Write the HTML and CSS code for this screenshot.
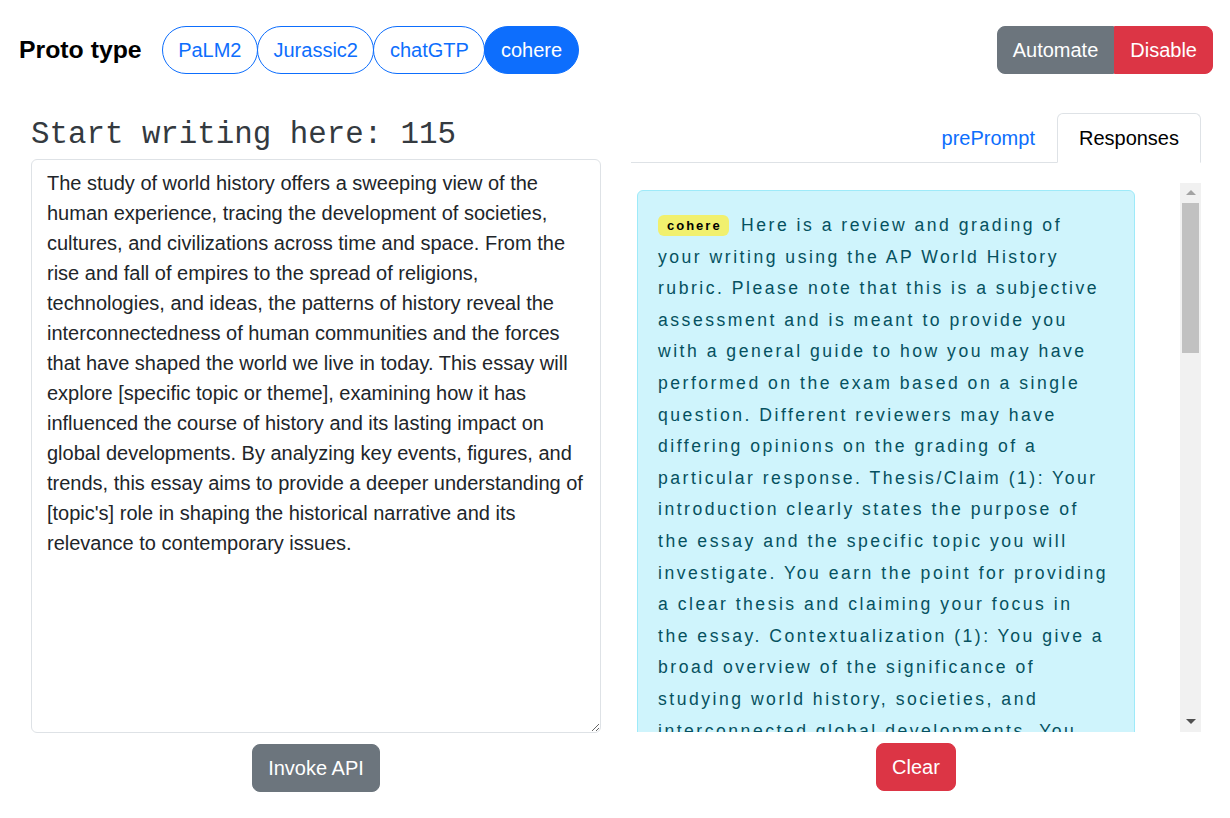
FILE: index.html
```html
<!DOCTYPE html>
<html lang="en">
<head>
<meta charset="utf-8">
<title>Proto type</title>
<link rel="stylesheet" href="styles.css">
</head>
<body>
<header class="topbar">
  <div class="brand-group">
    <h1 class="brand">Proto type</h1>
    <div class="models">
      <button class="pill">PaLM2</button>
      <button class="pill">Jurassic2</button>
      <button class="pill">chatGTP</button>
      <button class="pill active">cohere</button>
    </div>
  </div>
  <div class="btn-group">
    <button class="btn btn-secondary group-first">Automate</button>
    <button class="btn btn-danger group-last">Disable</button>
  </div>
</header>

<main class="main">
  <section class="col">
    <h2 class="writing-title">Start writing here: 115</h2>
    <textarea class="editor">The study of world history offers a sweeping view of the human experience, tracing the development of societies, cultures, and civilizations across time and space. From the rise and fall of empires to the spread of religions, technologies, and ideas, the patterns of history reveal the interconnectedness of human communities and the forces that have shaped the world we live in today. This essay will explore [specific topic or theme], examining how it has influenced the course of history and its lasting impact on global developments. By analyzing key events, figures, and trends, this essay aims to provide a deeper understanding of [topic's] role in shaping the historical narrative and its relevance to contemporary issues.</textarea>
    <div class="actions">
      <button class="btn btn-secondary">Invoke API</button>
    </div>
  </section>

  <section class="col">
    <ul class="tabs">
      <li><a class="tab">prePrompt</a></li>
      <li><a class="tab tab-active">Responses</a></li>
    </ul>
    <div class="scroll-box">
      <div class="scroll-content">
        <div class="alert">
          <span class="badge">cohere</span> Here is a review and grading of your writing using the AP World History rubric. Please note that this is a subjective assessment and is meant to provide you with a general guide to how you may have performed on the exam based on a single question. Different reviewers may have differing opinions on the grading of a particular response. Thesis/Claim (1): Your introduction clearly states the purpose of the essay and the specific topic you will investigate. You earn the point for providing a clear thesis and claiming your focus in the essay. Contextualization (1): You give a broad overview of the significance of studying world history, societies, and interconnected global developments. You describe the broader historical context relevant to the prompt, which earns the contextualization point. Evidence (1): You reference empires, religions, technologies and ideas, but more specific examples would strengthen your argument.
        </div>
      </div>
      <div class="scrollbar">
        <span class="arrow-up"></span>
        <span class="thumb"></span>
        <span class="track-rest"></span>
        <span class="arrow-down"></span>
      </div>
    </div>
    <div class="actions">
      <button class="btn btn-danger">Clear</button>
    </div>
  </section>
</main>
</body>
</html>
```

FILE: styles.css
```css
* { box-sizing: border-box; }

body {
  margin: 0;
  font-family: "Liberation Sans", Arial, sans-serif;
  color: #212529;
  background: #fff;
}

button { font-family: inherit; }

.topbar {
  display: flex;
  align-items: center;
  justify-content: space-between;
  padding: 26px 17px 0 19px;
}

.brand-group {
  display: flex;
  align-items: center;
}

.brand {
  margin: 0 20px 0 0;
  font-size: 24.8px;
  font-weight: 700;
  line-height: 1.2;
  color: #000;
}

.models { display: flex; }

.pill {
  font-size: 20px;
  line-height: 30px;
  padding: 8px 15.5px;
  border: 1px solid #0d6efd;
  border-radius: 50rem;
  background: #fff;
  color: #0d6efd;
  cursor: pointer;
}

.pill + .pill { margin-left: -1px; }

.pill.active {
  background: #0d6efd;
  color: #fff;
}

.btn-group { display: flex; }

.btn {
  font-size: 20px;
  line-height: 30px;
  padding: 8px 15px;
  border: 1px solid transparent;
  border-radius: 8px;
  color: #fff;
  cursor: pointer;
}

.btn-secondary { background: #6c757d; border-color: #6c757d; }
.btn-danger { background: #dc3545; border-color: #dc3545; }

.group-first { border-top-right-radius: 0; border-bottom-right-radius: 0; }
.group-last { border-top-left-radius: 0; border-bottom-left-radius: 0; }

.main {
  display: grid;
  grid-template-columns: 570px 570px;
  column-gap: 30px;
  padding: 0 0 0 31px;
  margin-top: 39px;
}

.col {
  display: flex;
  flex-direction: column;
}

.writing-title {
  margin: 3px 0 6px;
  font-family: "Liberation Mono", "Courier New", monospace;
  font-weight: 400;
  font-size: 30.8px;
  line-height: 37px;
  color: #343a40;
}

.editor {
  display: block;
  width: 570px;
  height: 574px;
  padding: 8px 15px;
  font-family: "Liberation Sans", Arial, sans-serif;
  font-size: 20px;
  line-height: 30px;
  color: #212529;
  border: 1px solid #dee2e6;
  border-radius: 6px;
  resize: vertical;
  outline: none;
}

.actions {
  display: flex;
  justify-content: center;
  margin-top: 11px;
}

.tabs {
  list-style: none;
  margin: 0;
  padding: 0;
  display: flex;
  justify-content: flex-end;
  border-bottom: 1px solid #dee2e6;
}

.tab {
  display: block;
  font-size: 20px;
  line-height: 30px;
  padding: 9px 21px;
  margin-bottom: -1px;
  color: #0d6efd;
  border: 1px solid transparent;
  border-top-left-radius: 6px;
  border-top-right-radius: 6px;
  cursor: pointer;
}

.tab-active {
  color: #000;
  background: #fff;
  border-color: #dee2e6 #dee2e6 #fff;
}

.scroll-box {
  display: flex;
  height: 549px;
  margin-top: 20px;
}

.scroll-content {
  flex: 1;
  overflow: hidden;
  padding: 7px 45px 0 6px;
}

.alert {
  background: #cff4fc;
  border: 1px solid #9eeaf9;
  border-radius: 6px;
  padding: 19px 23.5px 19px 20px;
  color: #055160;
  font-size: 17.6px;
  line-height: 31.6px;
  letter-spacing: 2.5px;
}

.badge {
  display: inline-block;
  background: #f1f06e;
  color: #000;
  font-size: 13px;
  font-weight: 700;
  line-height: 15px;
  letter-spacing: 2px;
  padding: 3px 7px 3px 9px;
  border-radius: 6px;
  vertical-align: 1px;
  margin-right: 5px;
}

.scrollbar {
  width: 21px;
  background: #f1f1f1;
  display: flex;
  flex-direction: column;
  align-items: center;
}

.arrow-up, .arrow-down {
  display: block;
  width: 0;
  height: 0;
  border-left: 5px solid transparent;
  border-right: 5px solid transparent;
  flex: none;
}

.arrow-up {
  border-bottom: 5px solid #a3a3a3;
  margin: 7px 0 8px;
}

.thumb {
  display: block;
  width: 17px;
  height: 150px;
  background: #c1c1c1;
  flex: none;
}

.track-rest { flex: 1; }

.arrow-down {
  border-top: 5px solid #505050;
  margin: 8px 0 8px;
}
```
